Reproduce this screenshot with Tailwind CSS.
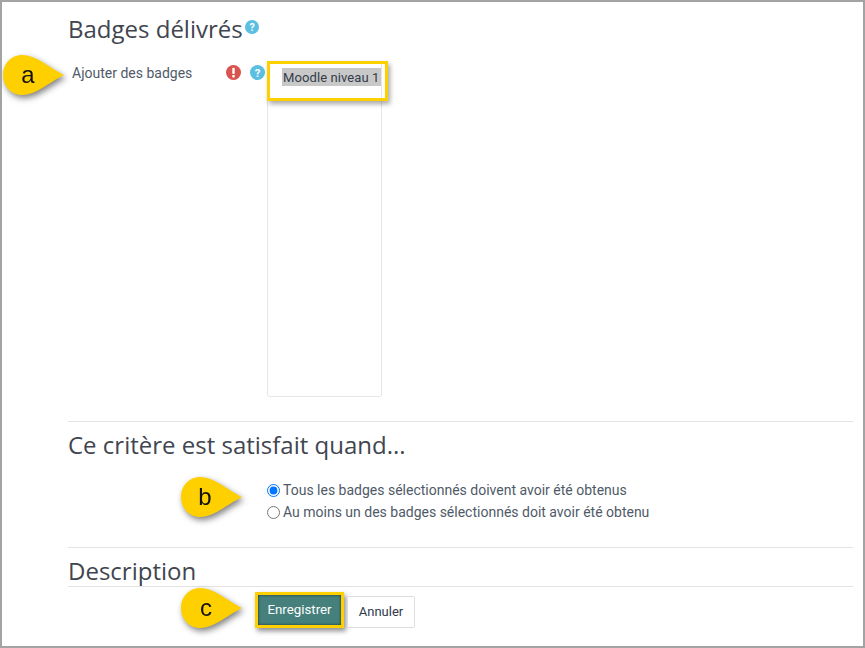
<!DOCTYPE html>
<html lang="fr">
<head>
  <meta charset="UTF-8" />
  <title>Badges délivrés</title>
  <script src="https://cdn.jsdelivr.net/npm/@tailwindcss/browser@4"></script>
</head>
<body class="bg-white">
  <div class="relative w-[865px] h-[648px] overflow-hidden border-2 border-[#a3a3a3] font-['Roboto',sans-serif] text-[#4f5a68]">
    <div class="pl-[66px] pr-[10px] pt-[11px]">

      <div class="flex items-start h-[34px]">
        <h2 class="font-['Open_Sans',sans-serif] text-[24px] leading-[32px] text-[#3f4650]">Badges délivrés</h2>
        <svg class="w-[14px] h-[14px] mt-[7px] ml-[2px]" viewBox="0 0 16 16">
          <circle cx="8" cy="8" r="8" fill="#5bbfe2" />
          <text x="8" y="12.4" text-anchor="middle" font-size="12" font-weight="700" font-family="Roboto" fill="#fff">?</text>
        </svg>
      </div>

      <div class="flex mt-[15px] h-[335px]">
        <div class="w-[158px] text-[14px] leading-[20px] pl-[4px] pt-[1px]">Ajouter des badges</div>
        <div class="flex gap-[9px] w-[41px] pt-[3px]">
          <svg class="w-[15px] h-[15px]" viewBox="0 0 16 16">
            <circle cx="8" cy="8" r="8" fill="#d9534f" />
            <rect x="6.7" y="3" width="2.6" height="6.6" rx="0.8" fill="#fff" />
            <rect x="6.7" y="10.7" width="2.6" height="2.6" rx="0.6" fill="#fff" />
          </svg>
          <svg class="w-[15px] h-[15px]" viewBox="0 0 16 16">
            <circle cx="8" cy="8" r="8" fill="#5bbfe2" />
            <text x="8" y="12.4" text-anchor="middle" font-size="12" font-weight="700" font-family="Roboto" fill="#fff">?</text>
          </svg>
        </div>
        <div class="w-[115px] h-[335px] border border-[#e6e6e6] rounded-[3px] pt-[5px] pl-[14px]">
          <div class="w-[99px] h-[18px] bg-[#c8c8c8] text-[13px] leading-[19px] tracking-[0.1px] text-[#333c48] whitespace-nowrap pl-[1px]">Moodle niveau 1</div>
        </div>
      </div>

      <div class="border-t border-[#e3e3e3] mt-[24px] pt-[9px]">
        <h3 class="font-['Open_Sans',sans-serif] text-[24px] leading-[28px] text-[#3f4650]">Ce critère est satisfait quand...</h3>
        <div class="pl-[199px] pt-[21px] flex flex-col gap-[2px] text-[14px] leading-[20px]">
          <label class="flex items-center gap-[3px]">
            <input type="radio" name="agg" checked class="w-[13px] h-[13px] accent-[#0075ff] m-0" />
            <span>Tous les badges sélectionnés doivent avoir été obtenus</span>
          </label>
          <label class="flex items-center gap-[3px]">
            <input type="radio" name="agg" class="w-[13px] h-[13px] m-0" />
            <span>Au moins un des badges sélectionnés doit avoir été obtenu</span>
          </label>
        </div>
      </div>

      <div class="border-t border-[#e3e3e3] mt-[25px] pt-[8px] pb-[1px]">
        <h3 class="font-['Open_Sans',sans-serif] text-[24px] leading-[29px] text-[#3f4650]">Description</h3>
      </div>

      <div class="border-t border-[#e3e3e3] pt-[5px] pl-[187px] flex items-start gap-[3px]">
        <button class="w-[89px] h-[36px] bg-[#45807c] border-[3px] border-[#ffd000] text-white text-[13.3px] shadow-[2px_3px_5px_rgba(0,0,0,0.45),inset_0_0_3px_rgba(0,0,0,0.6)]">Enregistrer</button>
        <button class="w-[68px] h-[32px] mt-[4px] bg-white border border-[#dedede] rounded-[2px] text-[#2f3a4a] text-[13px]">Annuler</button>
      </div>
    </div>

    <!-- highlight round the selected badge -->
    <div class="absolute left-[265px] top-[59px] w-[121px] h-[40px] border-[3px] border-[#ffd000] shadow-[2px_3px_5px_rgba(0,0,0,0.35)]"></div>

    <!-- callouts -->
    <svg class="absolute left-[0px] top-[52px] drop-shadow-[2px_3px_3px_rgba(0,0,0,0.5)]" width="64" height="44" viewBox="0 0 64 44">
      <path d="M20 1 C34 1 46 13 62 21 C46 29 34 41 20 41 C9 41 1 32 1 21 C1 10 9 1 20 1 Z" fill="#ffd000" />
      <text x="26" y="29" text-anchor="middle" font-size="24" font-family="Liberation Sans" fill="#111">a</text>
    </svg>
    <svg class="absolute left-[178px] top-[474px] drop-shadow-[2px_3px_3px_rgba(0,0,0,0.5)]" width="64" height="44" viewBox="0 0 64 44">
      <path d="M20 1 C34 1 46 13 62 21 C46 29 34 41 20 41 C9 41 1 32 1 21 C1 10 9 1 20 1 Z" fill="#ffd000" />
      <text x="25" y="29" text-anchor="middle" font-size="24" font-family="Liberation Sans" fill="#111">b</text>
    </svg>
    <svg class="absolute left-[178px] top-[585px] drop-shadow-[2px_3px_3px_rgba(0,0,0,0.5)]" width="64" height="44" viewBox="0 0 64 44">
      <path d="M20 1 C34 1 46 13 62 21 C46 29 34 41 20 41 C9 41 1 32 1 21 C1 10 9 1 20 1 Z" fill="#ffd000" />
      <text x="26" y="29" text-anchor="middle" font-size="24" font-family="Liberation Sans" fill="#111">c</text>
    </svg>
  </div>
</body>
</html>
